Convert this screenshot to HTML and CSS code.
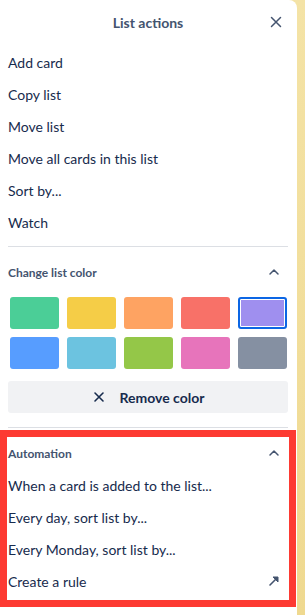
FILE: index.html
```html
<!DOCTYPE html>
<html lang="en">
<head>
    <meta charset="UTF-8">
    <meta name="viewport" content="width=device-width, initial-scale=1.0">
    <title>List actions</title>
    <link rel="stylesheet" href="styles.css">
</head>
<body>

    <div class="popover">
        <!-- Header -->
        <header class="popover-header">
            <span></span>
            <h2>List actions</h2>
            <button class="icon-btn" aria-label="Close">
                <svg width="16" height="16" viewBox="0 0 16 16"><path d="M3.5 3.5l9 9M12.5 3.5l-9 9" stroke="#44546f" stroke-width="1.5" stroke-linecap="round"/></svg>
            </button>
        </header>

        <!-- Main actions -->
        <ul class="menu">
            <li><button>Add card</button></li>
            <li><button>Copy list</button></li>
            <li><button>Move list</button></li>
            <li><button>Move all cards in this list</button></li>
            <li><button>Sort by...</button></li>
            <li><button>Watch</button></li>
        </ul>

        <hr class="divider">

        <!-- List color -->
        <section class="color-section">
            <div class="section-title">
                <span>Change list color</span>
                <svg width="16" height="16" viewBox="0 0 16 16"><path d="M4 10l4-4 4 4" fill="none" stroke="#44546f" stroke-width="1.5" stroke-linecap="round" stroke-linejoin="round"/></svg>
            </div>
            <div class="swatches">
                <button class="swatch green"></button>
                <button class="swatch yellow"></button>
                <button class="swatch orange"></button>
                <button class="swatch red"></button>
                <button class="swatch purple selected"></button>
                <button class="swatch blue"></button>
                <button class="swatch sky"></button>
                <button class="swatch lime"></button>
                <button class="swatch pink"></button>
                <button class="swatch gray"></button>
            </div>
            <button class="remove-color">
                <svg width="16" height="16" viewBox="0 0 16 16"><path d="M4 4l8 8M12 4l-8 8" stroke="#172b4d" stroke-width="1.6" stroke-linecap="round"/></svg>
                Remove color
            </button>
        </section>

        <hr class="divider">

        <!-- Automation (highlighted) -->
        <section class="automation">
            <div class="section-title">
                <span>Automation</span>
                <svg width="16" height="16" viewBox="0 0 16 16"><path d="M4 10l4-4 4 4" fill="none" stroke="#44546f" stroke-width="1.5" stroke-linecap="round" stroke-linejoin="round"/></svg>
            </div>
            <ul class="menu">
                <li><button>When a card is added to the list...</button></li>
                <li><button>Every day, sort list by...</button></li>
                <li><button>Every Monday, sort list by...</button></li>
                <li>
                    <button class="with-icon">
                        Create a rule
                        <svg width="16" height="16" viewBox="0 0 16 16"><path d="M4 12l6.5-6.5" stroke="#44546f" stroke-width="1.6" stroke-linecap="round"/><path d="M7 4h5v5z" fill="#44546f" stroke="#44546f" stroke-width="1" stroke-linejoin="round"/></svg>
                    </button>
                </li>
            </ul>
        </section>
    </div>

</body>
</html>
```

FILE: styles.css
```css
/* General Styles */
body {
    margin: 0;
    font-family: Lato, "Noto Sans", sans-serif;
    background: linear-gradient(180deg, #f4e3a6, #efd990);
    color: #172b4d;
}

button {
    font-family: inherit;
    border: none;
    background: none;
    cursor: pointer;
    padding: 0;
}

/* Popover panel */
.popover {
    width: 297px;
    min-height: 100vh;
    box-sizing: border-box;
    padding: 0 9px 0 8px;
    background-color: #fff;
    border-radius: 0 8px 0 0;
}

.popover-header {
    display: grid;
    grid-template-columns: 24px 1fr 24px;
    align-items: center;
    height: 44px;
    margin-bottom: 2px;
}

.popover-header h2 {
    margin: 0;
    font-size: 14px;
    font-weight: 700;
    color: #44546f;
    text-align: center;
}

.icon-btn {
    display: flex;
    align-items: center;
    justify-content: center;
    width: 24px;
    height: 24px;
}

/* Menu items */
.menu {
    list-style: none;
    margin: 0;
    padding: 0;
}

.menu button {
    display: flex;
    align-items: center;
    width: 100%;
    height: 32px;
    font-size: 14px;
    color: #172b4d;
    text-align: left;
}

.menu .with-icon {
    justify-content: space-between;
    padding-right: 6px;
}

.divider {
    border: none;
    border-top: 1px solid #dcdfe4;
    margin: 8px 0 9px;
}

/* Section titles */
.section-title {
    display: flex;
    align-items: center;
    justify-content: space-between;
    height: 32px;
    padding-right: 6px;
    font-size: 12px;
    font-weight: 700;
    color: #44546f;
}

/* Color swatches */
.swatches {
    display: grid;
    grid-template-columns: repeat(5, 1fr);
    gap: 8px;
    margin: 9px 1px 0 2px;
}

.swatch {
    height: 32px;
    border-radius: 3px;
    box-sizing: border-box;
}

.swatch.selected {
    border: 2px solid #0c66e4;
    box-shadow: inset 0 0 0 1px #fff;
}

.green { background-color: #4bce97; }
.yellow { background-color: #f5cd47; }
.orange { background-color: #fea362; }
.red { background-color: #f87168; }
.purple { background-color: #9f8fef; }
.blue { background-color: #579dff; }
.sky { background-color: #6cc3e0; }
.lime { background-color: #94c748; }
.pink { background-color: #e774bb; }
.gray { background-color: #8590a2; }

.remove-color {
    display: flex;
    align-items: center;
    justify-content: center;
    gap: 12px;
    width: 100%;
    height: 32px;
    margin-top: 12px;
    border-radius: 3px;
    background-color: #f1f2f4;
    font-size: 14px;
    font-weight: 700;
    color: #172b4d;
}

.color-section + .divider {
    margin: 14px 0 2px;
}

/* Highlighted automation block */
.automation {
    margin: 0 -8px;
    padding: 0 1px 3px;
    border: 7px solid #fd3a32;
}
```
